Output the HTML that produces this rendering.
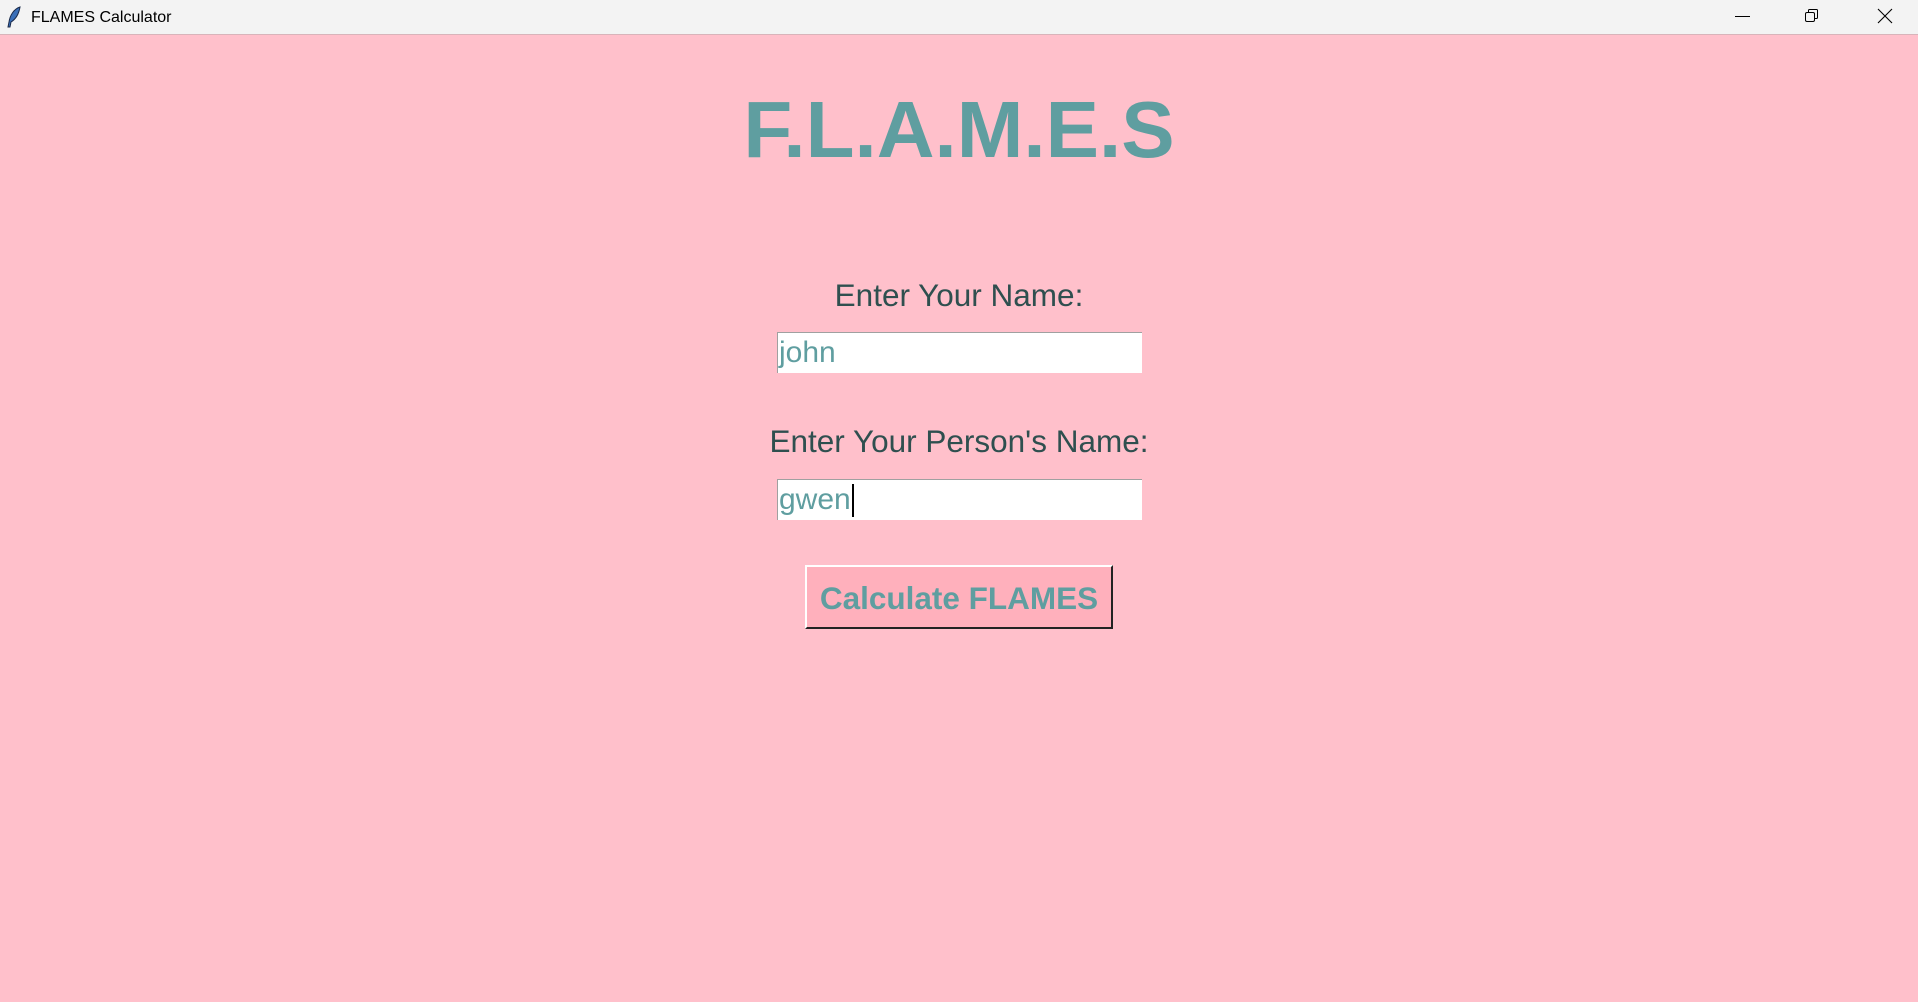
<!DOCTYPE html>
<html><head><style>
html,body{margin:0;padding:0;width:1918px;height:1002px;overflow:hidden;background:#ffc0cb;font-family:"Liberation Sans",Arial,sans-serif;}
#tb{position:absolute;left:0;top:0;width:1918px;height:34px;background:#f3f3f3;border-bottom:1px solid #d8b4ba;}
#tt{position:absolute;left:31px;top:9px;font-size:16px;color:#000;}
.a{position:absolute;white-space:nowrap;}
.lbl{font-size:31.5px;color:#2f4f4f;line-height:30px;}
.ent{position:absolute;left:777px;width:365px;height:41px;background:#fff;border-top:1px solid #a0a0a0;border-left:1px solid #a0a0a0;box-sizing:border-box;}
.ent span{position:absolute;left:1px;top:3px;font-size:30px;line-height:34px;color:#5f9ea0;}
</style></head><body>
<div id="tb">
<svg style="position:absolute;left:6px;top:6px" width="16" height="22" viewBox="0 0 16 22"><path d="M14 1 C8 3 4 9 3 16 L2 21 L4 21 L5 16 C10 13 13 7 14 1Z" fill="#3a6fb8" stroke="#1a2a4a" stroke-width="1"/></svg>
<div id="tt">FLAMES Calculator</div>
<svg style="position:absolute;left:1735px;top:16px" width="16" height="2"><rect width="15" height="1" fill="#000"/></svg>
<svg style="position:absolute;left:1804px;top:8px" width="16" height="16" viewBox="0 0 16 16" fill="none" stroke="#000" stroke-width="1"><rect x="1.5" y="4.5" width="9" height="9" rx="1.5"/><path d="M4.5 4.5V2.5Q4.5 1.5 5.5 1.5H12.5Q13.5 1.5 13.5 2.5V9.5Q13.5 10.5 12.5 10.5H10.5"/></svg>
<svg style="position:absolute;left:1877px;top:8px" width="16" height="16" viewBox="0 0 16 16" stroke="#000" stroke-width="1.1"><path d="M1 1L15 15M15 1L1 15"/></svg>
</div>
<div class="a" style="left:0;width:1918px;text-align:center;top:90px;font-size:80px;line-height:80px;font-weight:bold;color:#5f9ea0;">F.L.A.M.E.S</div>
<div class="a lbl" style="left:0;width:1918px;text-align:center;top:280px;">Enter Your Name:</div>
<div class="ent" style="top:332px;"><span>john</span></div>
<div class="a lbl" style="left:0;width:1918px;text-align:center;top:426px;">Enter Your Person's Name:</div>
<div class="ent" style="top:479px;"><span>gwen</span><div style="position:absolute;left:74px;top:4px;width:2px;height:33px;background:#000"></div></div>
<div class="a" style="left:805px;top:565px;width:308px;height:64px;box-sizing:border-box;background:#ffb0bc;border-top:2px solid #fff;border-left:2px solid #fff;border-right:2px solid #222;border-bottom:2px solid #222;"></div>
<div class="a" style="left:805px;width:308px;text-align:center;top:581px;font-size:31.5px;line-height:34px;font-weight:bold;color:#5f9ea0;">Calculate FLAMES</div>
</body></html>
